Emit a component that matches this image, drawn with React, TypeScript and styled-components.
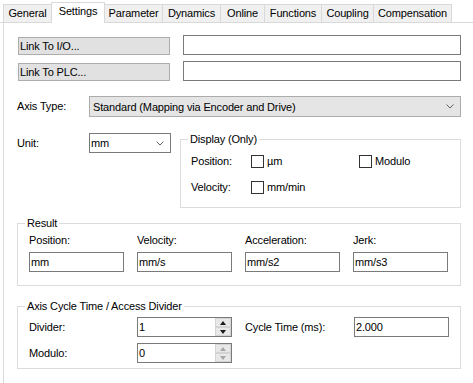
import React from "react";
import styled, { createGlobalStyle } from "styled-components";

const GlobalStyle = createGlobalStyle`
  html, body {
    margin: 0;
    padding: 0;
    background: #fff;
  }

  body {
    font-family: "Liberation Sans", Arial, sans-serif;
    font-size: 11px;
    letter-spacing: -0.15px;
    color: #000;
  }

  * {
    box-sizing: border-box;
  }
`;

const Window = styled.div`
  width: 473px;
  height: 383px;
  overflow: hidden;
  background: #fff;
`;

const TabBar = styled.div`
  display: flex;
  align-items: flex-end;
  height: 23px;
  padding: 2px 0 0 3px;
  border-bottom: 1px solid #d9d9d9;
`;

const Tab = styled.div<{ $width: number; $active?: boolean }>`
  position: relative;
  width: ${(p) => p.$width}px;
  height: ${(p) => (p.$active ? 21 : 18)}px;
  margin-left: -1px;
  margin-bottom: ${(p) => (p.$active ? -1 : 0)}px;
  padding-top: 2px;
  border: 1px solid #d9d9d9;
  border-bottom: none;
  background: ${(p) => (p.$active ? "#fff" : "#f0f0f0")};
  z-index: ${(p) => (p.$active ? 1 : 0)};
  text-align: center;
  line-height: 13px;
  white-space: nowrap;

  &:first-child {
    margin-left: 0;
  }
`;

const Panel = styled.div`
  margin-left: 3px;
  height: 360px;
  padding: 12px 0 0 13px;
  border-left: 1px solid #d9d9d9;
`;

const Content = styled.div`
  width: 444px;
`;

const LinkRow = styled.div`
  display: grid;
  grid-template-columns: 152px 278px;
  column-gap: 13px;
  align-items: end;
  padding-left: 1px;

  & + & {
    margin-top: 6px;
  }
`;

const LinkButton = styled.div`
  height: 18px;
  padding-left: 1px;
  border: 1px solid #adadad;
  background: #e1e1e1;
  line-height: 16px;
`;

const TextBox = styled.div<{ $width?: number }>`
  width: ${(p) => (p.$width ? `${p.$width}px` : "auto")};
  height: 20px;
  padding-left: 1px;
  border: 1px solid #7a7a7a;
  background: #fff;
  line-height: 18px;
`;

const AxisRow = styled.div`
  display: grid;
  grid-template-columns: 72px 372px;
  align-items: center;
  margin-top: 15px;
`;

const Label = styled.span`
  line-height: 13px;
  white-space: nowrap;
`;

const Combo = styled.div<{ $flat?: boolean; $width?: number }>`
  display: flex;
  align-items: center;
  justify-content: space-between;
  width: ${(p) => (p.$width ? `${p.$width}px` : "auto")};
  height: ${(p) => (p.$flat ? 21 : 20)}px;
  padding: 0 6px 0 ${(p) => (p.$flat ? 3 : 1)}px;
  border: 1px solid ${(p) => (p.$flat ? "#acacac" : "#7a7a7a")};
  background: ${(p) => (p.$flat ? "#e5e5e5" : "#fff")};
`;

const UnitRow = styled.div`
  display: flex;
  align-items: flex-start;
  margin-top: 16px;
`;

const UnitField = styled.div`
  display: grid;
  grid-template-columns: 72px 82px;
  align-items: center;
  margin-right: 9px;
`;

const Group = styled.fieldset<{ $width: number }>`
  width: ${(p) => p.$width}px;
  min-width: 0;
  margin: 0;
  padding: 0;
  border: 1px solid #dcdcdc;
`;

const Caption = styled.legend`
  height: 13px;
  margin-left: 7px;
  padding: 0 2px;
  line-height: 13px;
`;

const DisplayGrid = styled.div`
  display: grid;
  grid-template-columns: 60px 108px auto;
  grid-auto-rows: 13px;
  row-gap: 13px;
  align-items: center;
  padding: 9px 0 13px 10px;
`;

const Check = styled.label`
  display: flex;
  align-items: center;
  gap: 3px;
  line-height: 13px;
`;

const Box = styled.span`
  width: 13px;
  height: 13px;
  border: 1px solid #333;
  background: #fff;
`;

const ResultGroup = styled(Group)`
  margin-top: 9px;
`;

const ResultGrid = styled.div`
  display: grid;
  grid-template-columns: repeat(3, 108px) 95px;
  row-gap: 5px;
  padding: 4px 0 13px 11px;
`;

const CycleGroup = styled(Group)`
  margin-top: 14px;
`;

const CycleGrid = styled.div`
  display: grid;
  grid-template-columns: 108px 108px 109px 95px;
  grid-auto-rows: 20px;
  row-gap: 6px;
  align-items: center;
  padding: 4px 0 5px 11px;
`;

const Spin = styled.div`
  display: flex;
  justify-content: space-between;
  width: 95px;
  height: 20px;
  padding-left: 1px;
  border: 1px solid #7a7a7a;
  line-height: 18px;
`;

const SpinButtons = styled.div`
  display: flex;
  flex-direction: column;
  width: 16px;
  height: 18px;
`;

const SpinButton = styled.div`
  display: flex;
  align-items: center;
  justify-content: center;
  height: 9px;
  border: 1px solid #d4d4d4;
  background: #e8e8e8;
`;

const Arrow = styled.span<{ $down?: boolean; $disabled?: boolean }>`
  width: 0;
  height: 0;
  border-left: 3.5px solid transparent;
  border-right: 3.5px solid transparent;
  ${(p) =>
    p.$down
      ? `border-top: 4px solid ${p.$disabled ? "#a8a8a8" : "#1a1a1a"};`
      : `border-bottom: 4px solid ${p.$disabled ? "#a8a8a8" : "#1a1a1a"};`}
`;

const Chevron = () => (
  <svg width="8" height="5" viewBox="0 0 8 5">
    <polyline points="0.5,0.5 4,4 7.5,0.5" fill="none" stroke="#606060" strokeWidth="1" />
  </svg>
);

const tabs = [
  { name: "General", width: 49 },
  { name: "Settings", width: 54, active: true },
  { name: "Parameter", width: 59 },
  { name: "Dynamics", width: 59 },
  { name: "Online", width: 45 },
  { name: "Functions", width: 58 },
  { name: "Coupling", width: 53 },
  { name: "Compensation", width: 79 },
];

const results = [
  { label: "Position:", unit: "mm" },
  { label: "Velocity:", unit: "mm/s" },
  { label: "Acceleration:", unit: "mm/s2" },
  { label: "Jerk:", unit: "mm/s3" },
];

const SpinBox = ({ value, disabled }: { value: string; disabled?: boolean }) => (
  <Spin>
    <span>{value}</span>
    <SpinButtons>
      <SpinButton>
        <Arrow $disabled={disabled} />
      </SpinButton>
      <SpinButton>
        <Arrow $down $disabled={disabled} />
      </SpinButton>
    </SpinButtons>
  </Spin>
);

const App: React.FC = () => {
  return (
    <Window>
      <GlobalStyle />
      <TabBar>
        {tabs.map((t) => (
          <Tab key={t.name} $width={t.width} $active={t.active}>
            {t.name}
          </Tab>
        ))}
      </TabBar>
      <Panel>
        <Content>
          <LinkRow>
            <LinkButton>Link To I/O...</LinkButton>
            <TextBox />
          </LinkRow>
          <LinkRow>
            <LinkButton>Link To PLC...</LinkButton>
            <TextBox />
          </LinkRow>

          <AxisRow>
            <Label>Axis Type:</Label>
            <Combo $flat>
              <span>Standard (Mapping via Encoder and Drive)</span>
              <Chevron />
            </Combo>
          </AxisRow>

          <UnitRow>
            <UnitField>
              <Label>Unit:</Label>
              <Combo $width={82}>
                <span>mm</span>
                <Chevron />
              </Combo>
            </UnitField>
            <Group $width={281}>
              <Caption>Display (Only)</Caption>
              <DisplayGrid>
                <Label>Position:</Label>
                <Check>
                  <Box />
                  µm
                </Check>
                <Check>
                  <Box />
                  Modulo
                </Check>
                <Label>Velocity:</Label>
                <Check>
                  <Box />
                  mm/min
                </Check>
              </DisplayGrid>
            </Group>
          </UnitRow>

          <ResultGroup $width={444}>
            <Caption>Result</Caption>
            <ResultGrid>
              {results.map((r) => (
                <Label key={r.label}>{r.label}</Label>
              ))}
              {results.map((r) => (
                <TextBox key={r.unit} $width={95}>
                  {r.unit}
                </TextBox>
              ))}
            </ResultGrid>
          </ResultGroup>

          <CycleGroup $width={444}>
            <Caption>Axis Cycle Time / Access Divider</Caption>
            <CycleGrid>
              <Label>Divider:</Label>
              <SpinBox value="1" />
              <Label>Cycle Time (ms):</Label>
              <TextBox $width={95}>2.000</TextBox>
              <Label>Modulo:</Label>
              <SpinBox value="0" disabled />
            </CycleGrid>
          </CycleGroup>
        </Content>
      </Panel>
    </Window>
  );
};

export default App;
